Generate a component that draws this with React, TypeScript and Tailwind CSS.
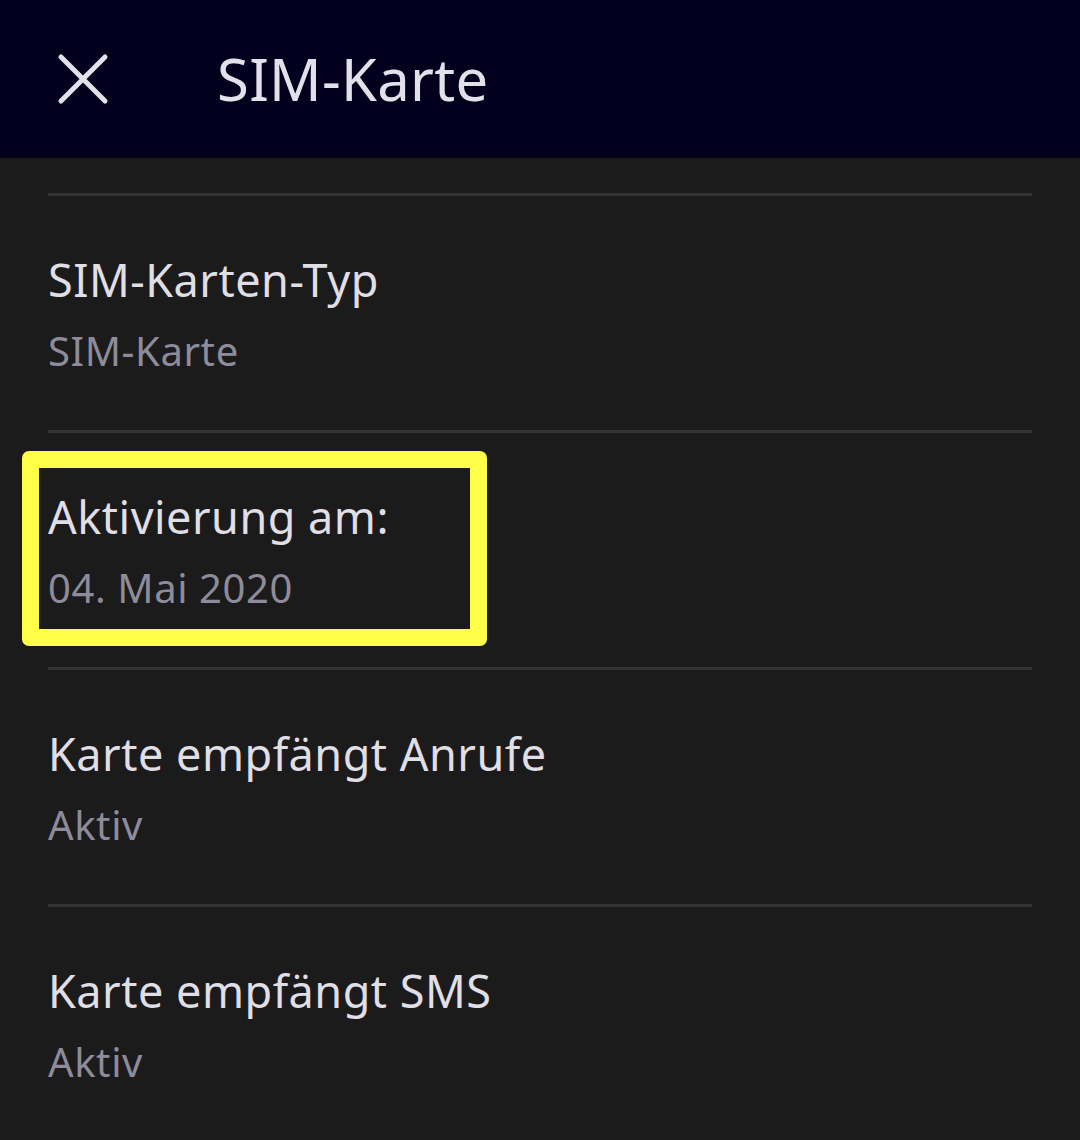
import React from "react";

const rows = [
  { title: "SIM-Karten-Typ", value: "SIM-Karte", highlight: false },
  { title: "Aktivierung am:", value: "04. Mai 2020", highlight: true },
  { title: "Karte empfängt Anrufe", value: "Aktiv", highlight: false },
  { title: "Karte empfängt SMS", value: "Aktiv", highlight: false },
];

export default function App() {
  return (
    <div
      className="w-[1080px] h-[1140px] bg-[#1b1b1b] overflow-hidden"
      style={{ fontFamily: '"Noto Sans", "Open Sans", sans-serif' }}
    >
      <header className="h-[158px] bg-[#03001d] flex items-center">
        <svg
          width="52"
          height="52"
          viewBox="0 0 52 52"
          className="ml-[57px] shrink-0"
          aria-hidden="true"
        >
          <path
            d="M4 4 L48 48 M48 4 L4 48"
            stroke="#e2e1ea"
            strokeWidth="5"
            strokeLinecap="round"
            fill="none"
          />
        </svg>
        <h1 className="ml-[108px] text-[58px] leading-[80px] tracking-[0.3px] text-[#e2e1ea] font-normal">
          SIM-Karte
        </h1>
      </header>
      <div className="px-[48px] pt-[35px]">
        {rows.map((r) => (
          <div key={r.title}>
            <div className="h-[3px] bg-[#333333]" />
            <div className="relative h-[234px] pt-[54px]">
              <div className="text-[45px] leading-[60px] tracking-[0.5px] text-[#e0dfe6]">
                {r.title}
              </div>
              <div className="mt-[13px] text-[40px] leading-[56px] tracking-[0.6px] text-[#8e8c9b]">
                {r.value}
              </div>
              {r.highlight && (
                <div className="absolute left-[-26px] top-[18px] w-[465px] h-[195px] border-[17px] border-[#ffff4a] rounded-[7px]" />
              )}
            </div>
          </div>
        ))}
      </div>
    </div>
  );
}
